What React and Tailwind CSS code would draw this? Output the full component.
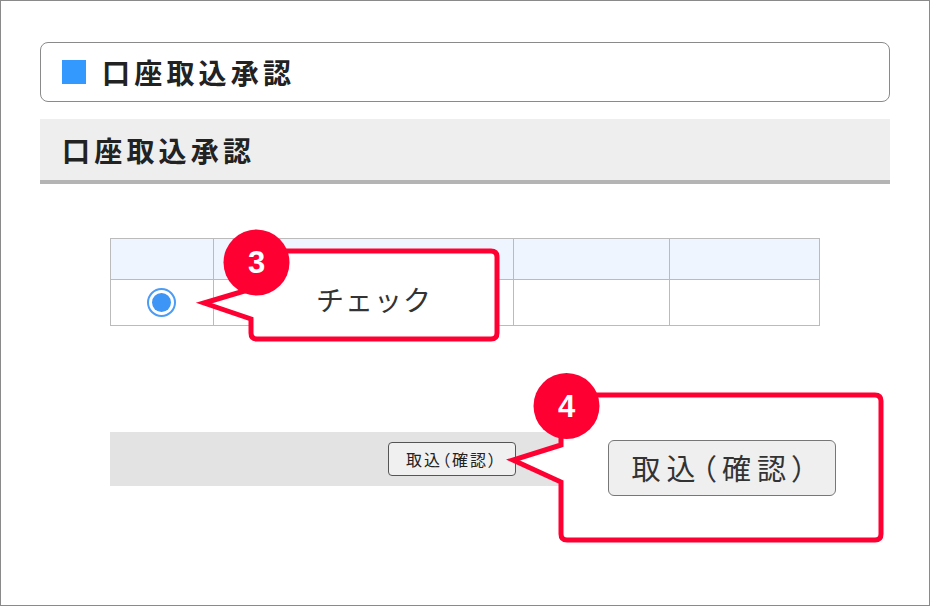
const jp = { fontFamily: '"Noto Sans CJK JP", "Noto Sans", sans-serif' };

function Callouts() {
  return (
    <svg className="absolute left-0 top-0 pointer-events-none" width="930" height="606" viewBox="0 0 930 606">
      <path
        d="M 250 288 L 203 302 L 250 318 L 250 332 Q 250 338 256 338 L 490 338 Q 496 338 496 332 L 496 256 Q 496 250 490 250 L 256 250 Q 250 250 250 256 Z"
        fill="#fff"
        stroke="#ff0033"
        strokeWidth="5"
        strokeLinejoin="miter"
      />
      <circle cx="255.5" cy="261.5" r="33" fill="#ff0033" />
      <path
        d="M 560 444 L 512 459 L 560 481 L 560 533 Q 560 539 566 539 L 874 539 Q 880 539 880 533 L 880 400 Q 880 394 874 394 L 566 394 Q 560 394 560 400 Z"
        fill="#fff"
        stroke="#ff0033"
        strokeWidth="5"
        strokeLinejoin="miter"
      />
      <circle cx="565.5" cy="405" r="33" fill="#ff0033" />
    </svg>
  );
}

export default function App() {
  return (
    <div className="relative w-[930px] h-[606px] bg-white border border-[#8a8a8a] overflow-hidden" style={jp}>
      <div className="px-[39px] pt-[41px]">
        {/* page title */}
        <div className="h-[60px] rounded-[8px] border border-[#8a8a8a] flex items-center pl-[21px]">
          <div className="w-6 h-6 bg-[#3399ff]" />
          <div className="ml-[16px] text-[28px] font-bold tracking-[0.15em] text-[#222] leading-none">口座取込承認</div>
        </div>

        {/* section header */}
        <div className="mt-[17px] h-[65px] bg-[#eeeeee] border-b-4 border-[#b4b4b4] flex items-center pl-[22px]">
          <div className="text-[28px] font-bold tracking-[0.15em] text-[#222] leading-none">口座取込承認</div>
        </div>

        {/* table */}
        <table className="ml-[70px] mt-[54px] border-collapse w-[710px]">
          <tbody>
            <tr className="h-[41px] bg-[#eef5fe]">
              <td className="w-[103px] border border-[#bbbbbb]" />
              <td className="w-[301px] border border-[#bbbbbb]" />
              <td className="w-[156px] border border-[#bbbbbb]" />
              <td className="w-[150px] border border-[#bbbbbb]" />
            </tr>
            <tr className="h-[46px]">
              <td className="border border-[#bbbbbb]">
                <div className="mx-auto w-[29px] h-[29px] rounded-full border-2 border-[#4a9cf6] flex items-center justify-center">
                  <div className="w-[19px] h-[19px] rounded-full bg-[#3d95f5]" />
                </div>
              </td>
              <td className="border border-[#bbbbbb]" />
              <td className="border border-[#bbbbbb]" />
              <td className="border border-[#bbbbbb]" />
            </tr>
          </tbody>
        </table>

        {/* button bar */}
        <div className="ml-[70px] mt-[106px] w-[710px] h-[54px] bg-[#e3e3e3] flex items-center pl-[278px]">
          <div className="w-[128px] h-[34px] rounded-[4px] border border-[#555] bg-[#f0f0f0] flex items-center justify-center text-[16px] tracking-[2px] [font-feature-settings:'palt'] text-[#222]">
            取込（確認）
          </div>
        </div>
      </div>

      <Callouts />

      <div className="absolute left-[222px] top-[228px] w-[67px] h-[67px] flex items-center justify-center text-white text-[31px] font-extrabold leading-none" style={{ fontFamily: '"Liberation Sans", Arial, sans-serif' }}>
        3
      </div>
      <div className="absolute left-[532px] top-[372px] w-[67px] h-[67px] flex items-center justify-center text-white text-[31px] font-extrabold leading-none" style={{ fontFamily: '"Liberation Sans", Arial, sans-serif' }}>
        4
      </div>

      <div className="absolute left-[247px] top-[284px] w-[252px] text-center text-[28px] tracking-[1px] leading-none text-[#333]">
        チェック
      </div>

      <div className="absolute left-[607px] top-[439px] w-[228px] h-[56px] rounded-[6px] border border-[#777] bg-[#efefef] flex items-center justify-center text-[29px] tracking-[6px] [font-feature-settings:'palt'] text-[#333]">
        取込（確認）
      </div>
    </div>
  );
}
